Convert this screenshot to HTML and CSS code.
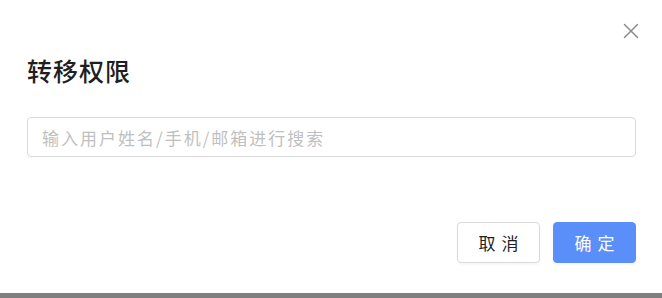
FILE: index.html
```html
<!DOCTYPE html>
<html lang="zh-CN">
<head>
<meta charset="utf-8">
<title>转移权限</title>
<link rel="stylesheet" href="styles.css">
</head>
<body>
<div class="dialog">
  <button class="close" aria-label="关闭">
    <svg width="16" height="16" viewBox="0 0 16 16"><path d="M1.5 1.5 L14.5 14.5 M14.5 1.5 L1.5 14.5" stroke="#8c8c8c" stroke-width="1.5" fill="none" stroke-linecap="round"/></svg>
  </button>
  <h2 class="title">转移权限</h2>
  <input class="search" type="text" placeholder="输入用户姓名/手机/邮箱进行搜索">
  <div class="footer">
    <button class="btn btn-default">取消</button>
    <button class="btn btn-primary">确定</button>
  </div>
</div>
<div class="shade"></div>
</body>
</html>
```

FILE: styles.css
```css
html, body {
  margin: 0;
  padding: 0;
  background: #ffffff;
  font-family: "Noto Sans CJK SC", "Noto Sans", sans-serif;
}

.dialog {
  position: relative;
  height: 293px;
  box-sizing: border-box;
  padding: 52px 26px 0 27px;
  display: flex;
  flex-direction: column;
  background: #ffffff;
}

.close {
  position: absolute;
  top: 23px;
  right: 23px;
  width: 16px;
  height: 16px;
  padding: 0;
  border: 0;
  background: transparent;
  display: flex;
  align-items: center;
  justify-content: center;
}

.title {
  margin: 0;
  font-size: 25px;
  line-height: 36px;
  font-weight: 500;
  letter-spacing: 1px;
  color: #1f1f1f;
}

.search {
  margin-top: 29px;
  height: 40px;
  box-sizing: border-box;
  border: 1px solid #d9d9d9;
  border-radius: 4px;
  padding: 0 14px;
  font-family: inherit;
  font-size: 17px;
  letter-spacing: 2px;
  outline: none;
}

.search::placeholder {
  color: #bfbfbf;
}

.footer {
  margin-top: 65px;
  display: flex;
  justify-content: flex-end;
  gap: 13px;
}

.btn {
  width: 83px;
  height: 41px;
  box-sizing: border-box;
  border-radius: 4px;
  font-family: inherit;
  font-size: 17px;
  letter-spacing: 6px;
  text-indent: 6px;
  padding: 0;
  box-shadow: 0 2px 2px rgba(0, 0, 0, 0.03);
}

.btn-default {
  background: #ffffff;
  border: 1px solid #d9d9d9;
  color: #1f1f1f;
}

.btn-primary {
  background: #5a8ef8;
  border: 1px solid #5a8ef8;
  color: #ffffff;
}

.shade {
  height: 5px;
  background: #7f7f7f;
}
```
